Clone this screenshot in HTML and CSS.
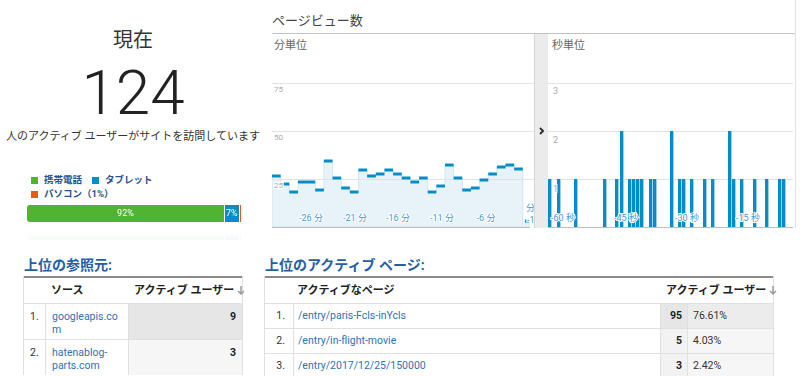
FILE: index.html
```html
<!DOCTYPE html>
<html lang="ja">

<head>
  <meta charset="UTF-8">
  <title>リアルタイム - サマリー</title>
  <link rel="stylesheet" href="styles.css">
</head>

<body>
  <div class="top">
    <div class="now">
      <div class="now-label">現在</div>
      <div class="now-count">124</div>
      <div class="now-sub">人のアクティブ ユーザーがサイトを訪問しています</div>
      <div class="devices">
        <ul class="legend">
          <li><span class="swatch swatch-mobile"></span>携帯電話</li>
          <li><span class="swatch swatch-tablet"></span>タブレット</li>
          <li><span class="swatch swatch-desktop"></span>パソコン（1%）</li>
        </ul>
        <div class="share">
          <div class="seg seg-mobile" style="width: 92%">92%</div>
          <div class="seg seg-tablet" style="width: 7%">7%</div>
          <div class="seg seg-desktop" style="width: 1%"></div>
        </div>
      </div>
    </div>

    <div class="pageviews">
      <h2>ページビュー数</h2>
      <div class="charts">
        <div class="panel panel-min">
          <div class="panel-title">分単位</div>
          <svg class="chart" width="262" height="174" viewBox="0 0 262 174">
            <path class="area" d="M0,173V122H8.65V130H17.3V138H25.95V128H43.25V136H51.9V107H60.55V124H69.2V134H77.85V138H86.5V116H95.15V122H103.8V120H112.45V116H121.1V120H129.75V124H138.4V128H147.05V124H155.7V138H164.35V132H173V111H181.65V124H190.3V136H198.95V134H207.6V126H216.25V120H224.9V113H233.55V111H242.2V115H250.85V173Z" />
            <path class="area" d="M253,173V167H257V173Z" />
            <g class="grid">
              <line x1="0" y1="29.5" x2="262" y2="29.5" />
              <line x1="0" y1="77.5" x2="262" y2="77.5" />
              <line x1="0" y1="125.5" x2="262" y2="125.5" />
            </g>
            <path class="step" d="M0,122H8.65M8.65,130H17.3M17.3,138H25.95M25.95,128H34.6M34.6,128H43.25M43.25,136H51.9M51.9,107H60.55M60.55,124H69.2M69.2,134H77.85M77.85,138H86.5M86.5,116H95.15M95.15,122H103.8M103.8,120H112.45M112.45,116H121.1M121.1,120H129.75M129.75,124H138.4M138.4,128H147.05M147.05,124H155.7M155.7,138H164.35M164.35,132H173M173,111H181.65M181.65,124H190.3M190.3,136H198.95M198.95,134H207.6M207.6,126H216.25M216.25,120H224.9M224.9,113H233.55M233.55,111H242.2M242.2,115H250.85M253,167H257" />
            <line class="axis" x1="0" y1="173.5" x2="258" y2="173.5" />
            <g class="ylab">
              <text x="2" y="38">75</text>
              <text x="2" y="86">50</text>
              <text x="2" y="134">25</text>
            </g>
            <g class="xlab">
              <text x="39" y="167">-26 分</text>
              <text x="83" y="167">-21 分</text>
              <text x="126" y="167">-16 分</text>
              <text x="170" y="167">-11 分</text>
              <text x="214" y="167">-6 分</text>
              <text class="cut" x="254" y="157">分</text>
              <text class="cut" x="255" y="169">-1</text>
            </g>
          </svg>
        </div>

        <div class="divider">
          <svg width="5" height="8" viewBox="0 0 5 8"><path d="M1,1L4,4L1,7" /></svg>
        </div>

        <div class="panel panel-sec">
          <div class="panel-title">秒単位</div>
          <svg class="chart" width="247" height="174" viewBox="0 0 247 174">
            <defs>
              <linearGradient id="bar" x1="0" x2="1" y1="0" y2="0">
                <stop offset="0.75" stop-color="#058dc7" />
                <stop offset="0.75" stop-color="#9fcfeb" />
              </linearGradient>
            </defs>
            <g class="grid">
              <line x1="0" y1="29.5" x2="245" y2="29.5" />
              <line x1="0" y1="77.5" x2="245" y2="77.5" />
              <line x1="0" y1="125.5" x2="245" y2="125.5" />
            </g>
            <g class="bars">
              <rect x="0" y="125" width="4" height="48" />
              <rect x="9" y="125" width="4" height="48" />
              <rect x="26" y="125" width="4" height="48" />
              <rect x="55" y="125" width="4" height="48" />
              <rect x="67" y="125" width="4" height="48" />
              <rect x="72" y="77" width="4" height="96" />
              <rect x="80" y="125" width="4" height="48" />
              <rect x="84" y="125" width="4" height="48" />
              <rect x="88" y="125" width="4" height="48" />
              <rect x="92" y="125" width="4" height="48" />
              <rect x="101" y="125" width="4" height="48" />
              <rect x="105" y="125" width="4" height="48" />
              <rect x="122" y="77" width="4" height="96" />
              <rect x="130" y="125" width="4" height="48" />
              <rect x="134" y="125" width="4" height="48" />
              <rect x="142" y="125" width="4" height="48" />
              <rect x="155" y="125" width="4" height="48" />
              <rect x="163" y="125" width="4" height="48" />
              <rect x="180" y="77" width="4" height="96" />
              <rect x="184" y="125" width="4" height="48" />
              <rect x="192" y="125" width="4" height="48" />
              <rect x="205" y="125" width="4" height="48" />
              <rect x="217" y="125" width="4" height="48" />
              <rect x="230" y="125" width="4" height="48" />
              <rect x="234" y="125" width="4" height="48" />
            </g>
            <line class="axis" x1="0" y1="173.5" x2="245" y2="173.5" />
            <g class="ylab">
              <text x="5" y="40">3</text>
              <text x="5" y="89">2</text>
              <text x="5" y="138">1</text>
            </g>
            <g class="xlab">
              <text x="15" y="167">-60 秒</text>
              <text x="78" y="167">-45 秒</text>
              <text x="139" y="167">-30 秒</text>
              <text x="200" y="167">-15 秒</text>
            </g>
          </svg>
        </div>
      </div>
    </div>
  </div>

  <div class="bottom">
    <section class="block">
      <h3>上位の参照元:</h3>
      <table class="list list-ref">
        <colgroup>
          <col class="c-num">
          <col class="c-src">
          <col class="c-val">
        </colgroup>
        <thead>
          <tr>
            <th></th>
            <th>ソース</th>
            <th class="th-val">アクティブ ユーザー<svg class="sort" width="8" height="9" viewBox="0 0 8 9"><path d="M4,0V8M1,5L4,8L7,5" /></svg></th>
          </tr>
        </thead>
        <tbody>
          <tr class="hot">
            <td class="num">1.</td>
            <td class="link"><a href="#">googleapis.co<wbr>m</a></td>
            <td class="val">9</td>
          </tr>
          <tr>
            <td class="num">2.</td>
            <td class="link"><a href="#">hatenablog-parts.com</a></td>
            <td class="val">3</td>
          </tr>
        </tbody>
      </table>
    </section>

    <section class="block">
      <h3>上位のアクティブ ページ:</h3>
      <table class="list list-pages">
        <colgroup>
          <col class="c-num">
          <col class="c-page">
          <col class="c-val">
          <col class="c-pct">
        </colgroup>
        <thead>
          <tr>
            <th></th>
            <th>アクティブなページ</th>
            <th class="th-val" colspan="2">アクティブ ユーザー<svg class="sort" width="8" height="9" viewBox="0 0 8 9"><path d="M4,0V8M1,5L4,8L7,5" /></svg></th>
          </tr>
        </thead>
        <tbody>
          <tr class="hot">
            <td class="num">1.</td>
            <td class="link"><a href="#">/entry/paris-Fcls-inYcls</a></td>
            <td class="val">95</td>
            <td class="pct">76.61%</td>
          </tr>
          <tr>
            <td class="num">2.</td>
            <td class="link"><a href="#">/entry/in-flight-movie</a></td>
            <td class="val">5</td>
            <td class="pct">4.03%</td>
          </tr>
          <tr>
            <td class="num">3.</td>
            <td class="link"><a href="#">/entry/2017/12/25/150000</a></td>
            <td class="val">3</td>
            <td class="pct">2.42%</td>
          </tr>
        </tbody>
      </table>
    </section>
  </div>
</body>

</html>
```

FILE: styles.css
```css
body {
  margin: 0;
  font-family: Roboto, "Noto Sans CJK JP", sans-serif;
  color: #333;
  background-color: #fff;
}

.top {
  display: flex;
}

/* current visitors */
.now {
  width: 266px;
  margin-right: 6px;
  padding-top: 28px;
  text-align: center;
}

.now-label {
  font-size: 20px;
  line-height: 24px;
  color: #333;
}

.now-count {
  margin-top: 10px;
  font-size: 62px;
  line-height: 62px;
  font-weight: 300;
  color: #222;
}

.now-sub {
  margin-top: 6px;
  font-size: 11px;
  line-height: 14px;
  white-space: nowrap;
}

.devices {
  width: 214px;
  margin: 29px 0 0 27px;
  text-align: left;
}

.legend {
  display: flex;
  flex-wrap: wrap;
  width: 150px;
  margin: 0;
  padding: 0 0 0 4px;
  list-style: none;
  font-size: 9.5px;
  line-height: 14px;
  font-weight: bold;
  color: #25548a;
}

.legend li {
  display: flex;
  align-items: center;
  margin-right: 10px;
}

.swatch {
  width: 7px;
  height: 7px;
  margin-right: 6px;
}

.swatch-mobile,
.seg-mobile {
  background-color: #50b432;
}

.swatch-tablet,
.seg-tablet {
  background-color: #058dc7;
}

.swatch-desktop,
.seg-desktop {
  background-color: #ed561b;
}

.share {
  display: flex;
  height: 17px;
  margin-top: 4px;
  border-radius: 3px 0 0 3px;
  overflow: hidden;
  font-size: 9px;
  line-height: 17px;
  color: #fff;
  text-align: center;
  -webkit-box-reflect: below 1px linear-gradient(rgba(0, 0, 0, 0.06), transparent 45%);
}

.seg {
  box-sizing: border-box;
}

.seg + .seg {
  border-left: 1px solid #fff;
}

/* page views chart */
.pageviews {
  width: 523px;
  border-right: 1px solid #e2e2e2;
}

.pageviews h2 {
  margin: 0;
  padding: 12px 0 3px;
  font-size: 13px;
  line-height: 18px;
  font-weight: normal;
  color: #444;
  border-bottom: 1px solid #c4c4c4;
}

.charts {
  display: flex;
}

.panel-min {
  width: 262px;
}

.panel-sec {
  width: 247px;
}

.panel-title {
  padding: 5px 0 1px 2px;
  font-size: 11px;
  line-height: 14px;
  color: #666;
}

.panel-sec .panel-title {
  padding-left: 4px;
}

.chart {
  display: block;
}

.divider {
  width: 13px;
  border-left: 1px solid #d6d6d6;
  background-color: #ebebeb;
  display: flex;
  align-items: center;
  justify-content: center;
}

.divider path {
  fill: none;
  stroke: #333;
  stroke-width: 2;
}

.area {
  fill: #e7f2f9;
  stroke: #d2e6f4;
  stroke-width: 1;
}

.grid line {
  stroke: #e2e2e2;
  stroke-width: 1;
}

.step {
  fill: none;
  stroke: #058dc7;
  stroke-width: 3;
}

.bars rect {
  fill: url(#bar);
}

.axis {
  stroke: #bdbdbd;
  stroke-width: 1;
}

.ylab text {
  font-size: 8px;
  fill: #aaa;
  stroke: #fff;
  stroke-width: 2px;
  paint-order: stroke;
}

.panel-sec .ylab text {
  font-size: 9px;
}

.xlab text {
  font-size: 9px;
  fill: #4a98d1;
  stroke: #fff;
  stroke-width: 2px;
  paint-order: stroke;
  text-anchor: middle;
}

.xlab .cut {
  text-anchor: start;
}

/* top lists */
.bottom {
  display: flex;
  gap: 21px;
  padding: 28px 0 0 23px;
}

.block h3 {
  margin: 0 0 2px 1px;
  font-size: 14px;
  line-height: 18px;
  font-weight: bold;
  color: #2460a7;
}

.list {
  border-collapse: separate;
  border-spacing: 0;
  table-layout: fixed;
  border-left: 1px solid #e0e0e0;
  border-right: 1px solid #e0e0e0;
  font-size: 11px;
  line-height: 14px;
  color: #333;
}

.list-ref {
  width: 220px;
}

.list-pages {
  width: 510px;
}

.list th {
  padding: 6px 6px 5px;
  border-top: 2px solid #8a8a8a;
  text-align: left;
  font-weight: bold;
  color: #222;
  white-space: nowrap;
}

.list .th-val {
  padding-right: 2px;
  text-align: right;
}

.sort {
  margin-left: 3px;
  vertical-align: -1px;
}

.sort path {
  fill: none;
  stroke: #9a9a9a;
  stroke-width: 1.5;
}

.list td {
  padding: 5px;
  border-top: 1px solid #e0e0e0;
  vertical-align: top;
  font-size: 10.5px;
}

.list td + td {
  border-left: 1px solid #e0e0e0;
}

.list .num {
  padding-right: 8px;
  text-align: right;
}

.list .val {
  text-align: right;
  font-weight: bold;
  color: #222;
  background-color: #f2f2f2;
}

.list .pct {
  background-color: #f6f6f6;
}

.list .hot .val {
  background-color: #e6e6e6;
}

.list .hot .pct {
  background-color: #ececec;
}

.list a {
  color: #2f72b8;
  text-decoration: none;
}

.list-ref td {
  padding: 6px 6px 3px;
  line-height: 13px;
}

.list-ref .num {
  padding-right: 9px;
}

.list-ref .link {
  padding-right: 14px;
}

.list-ref .val {
  background-color: #f6f6f6;
}

.list-ref .c-num {
  width: 21px;
}

.list-ref .c-src {
  width: 83px;
}

.list-ref .c-val {
  width: 114px;
}

.list-pages .c-num {
  width: 28px;
}

.list-pages .c-page {
  width: 367px;
}

.list-pages .c-val {
  width: 27px;
}

.list-pages .c-pct {
  width: 86px;
}

.list-pages .link {
  padding-left: 4px;
}

.list-pages th:nth-child(2) {
  padding-left: 4px;
}
```
